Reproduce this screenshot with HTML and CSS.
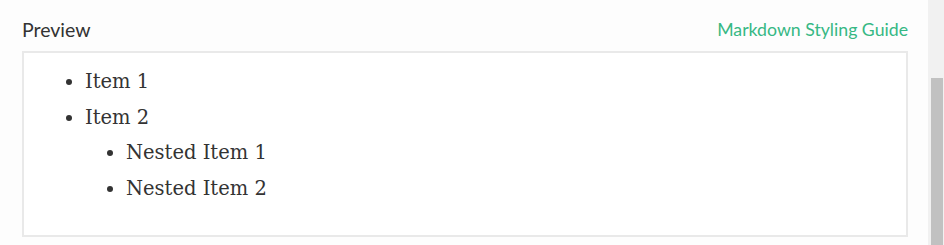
FILE: index.html
```html
<!DOCTYPE html>
<html>
<head>
<meta charset="utf-8">
<link rel="stylesheet" href="styles.css">
</head>
<body>
<div class="page">
  <div class="main">
    <div class="header">
      <span class="title">Preview</span>
      <a class="guide" href="#">Markdown Styling Guide</a>
    </div>
    <div class="preview">
      <ul class="list">
        <li>Item 1</li>
        <li>Item 2
          <ul class="list nested">
            <li>Nested Item 1</li>
            <li>Nested Item 2</li>
          </ul>
        </li>
      </ul>
    </div>
  </div>
  <div class="scrollbar"><div class="thumb"></div></div>
</div>
</body>
</html>
```
FILE: styles.css
```css
html, body { margin: 0; padding: 0; background: #fdfdfd; }
.page { display: flex; width: 944px; height: 245px; overflow: hidden; }
.main { flex: 1; padding: 0 20px 0 22px; }
.header { display: flex; justify-content: space-between; align-items: center; height: 51px; padding-top: 7px; box-sizing: border-box; font-family: "Lato", "Open Sans", sans-serif; }
.title { font-size: 19.5px; color: #333; }
.guide { font-size: 17.7px; color: #36b884; text-decoration: none; }
.preview { height: 186px; box-sizing: border-box; border: 2px solid #e9e9e9; background: #fff; }
.list { margin: 0; padding-left: 61px; list-style: disc; font-family: "DejaVu Serif", serif; font-size: 19.5px; color: #333; line-height: 35.7px; }
.preview > .list { padding-top: 11px; }
.list.nested { padding-left: 41px; list-style: disc; }
.scrollbar { width: 16px; background: #f1f1f1; display: flex; flex-direction: column; padding-top: 78px; box-sizing: border-box; align-items: center; }
.thumb { width: 12px; flex: 1; background: #c1c1c1; margin-left: 1px; }
```
